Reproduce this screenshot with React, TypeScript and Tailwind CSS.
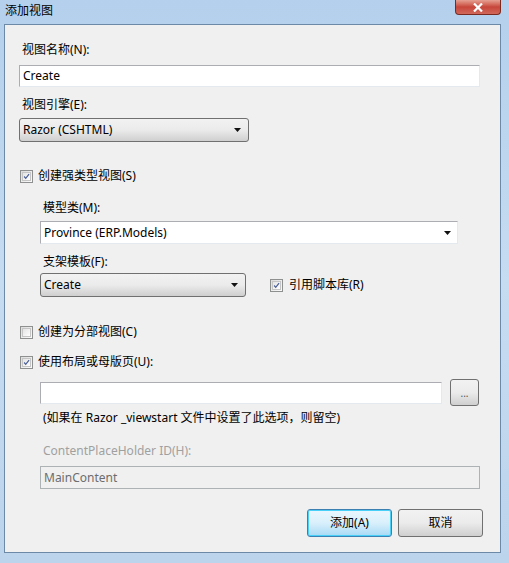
import React from 'react';

const font = { fontFamily: '"Noto Sans", "Noto Sans CJK SC", sans-serif' };

const Check: React.FC<{ checked?: boolean }> = ({ checked }) => (
  <div className="w-[13px] h-[13px] border border-[#8e8f8f] bg-gradient-to-br from-[#dcdcdc] to-[#fbfbfb] flex items-center justify-center shrink-0">
    <div className="w-[9px] h-[9px] border border-[#c5c5c5] bg-gradient-to-br from-[#e4e4e4] to-white flex items-center justify-center">
      {checked && (
        <svg width="9" height="9" viewBox="0 0 9 9">
          <path d="M1.5 4.5 L3.5 6.8 L7.8 1.5" fill="none" stroke="#4a5f97" strokeWidth="1.6" />
        </svg>
      )}
    </div>
  </div>
);

const Arrow = () => (
  <svg width="7" height="4" viewBox="0 0 7 4">
    <path d="M0 0 H7 L3.5 4 Z" fill="#111" />
  </svg>
);

const Select: React.FC<{ value: string; w: string }> = ({ value, w }) => (
  <div className={`${w} h-[24px] rounded-[3px] border border-[#707070] bg-gradient-to-b from-[#f2f2f2] via-[#ebebeb] to-[#cfcfcf] flex items-center justify-between pl-[3px] pr-[7px] text-[12px] text-black`}>
    <span>{value}</span>
    <Arrow />
  </div>
);

const App: React.FC = () => {
  return (
    <div style={font} className="w-[509px] h-[563px] bg-gradient-to-b from-[#b4d0ec] via-[#c6dcf1] to-[#bcd4ec] flex flex-col overflow-hidden">
      {/* title bar */}
      <div className="h-[24px] flex items-start justify-between shrink-0">
        <div className="pl-[5px] pt-[3px] text-[12px] leading-[16px] text-black">添加视图</div>
        <div className="mr-[8px] w-[46px] h-[15px] rounded-b-[4px] border border-[#7a2a20] border-t-0 bg-gradient-to-b from-[#e5a093] via-[#c7453a] to-[#d0685a] flex items-center justify-center">
          <svg width="10" height="9" viewBox="0 0 10 9">
            <path d="M1 0.5 L9 8.5 M9 0.5 L1 8.5" stroke="#fff" strokeWidth="2.2" />
          </svg>
        </div>
      </div>

      {/* client area */}
      <div className="ml-[4px] mr-[8px] h-[529px] border border-[#6d89a8] bg-[#f0f0f0] text-[12px] text-black flex flex-col">
        <div className="pl-[17px] pt-[19px] leading-[12px]">视图名称(N):</div>
        <div className="ml-[14px] mt-[9px] w-[461px] h-[22px] bg-white border border-[#abadb3] border-r-[#e3e9ef] border-b-[#e3e9ef] flex items-center pl-[3px]">Create</div>
        <div className="pl-[17px] mt-[12px] leading-[12px]">视图引擎(E):</div>
        <div className="ml-[14px] mt-[7px]">
          <Select value="Razor (CSHTML)" w="w-[230px]" />
        </div>

        <div className="ml-[15px] mt-[27px] flex items-center gap-[5px] h-[14px]">
          <Check checked />
          <span>创建强类型视图(S)</span>
        </div>

        <div className="pl-[38px] mt-[19px] leading-[12px]">模型类(M):</div>
        <div className="ml-[35px] mt-[7px] w-[418px] h-[23px] bg-white border border-[#abadb3] border-r-[#e3e9ef] border-b-[#e3e9ef] flex items-center justify-between pl-[3px] pr-[6px]">
          <span>Province (ERP.Models)</span>
          <Arrow />
        </div>
        <div className="pl-[38px] mt-[12px] leading-[12px]">支架模板(F):</div>
        <div className="ml-[35px] mt-[5px] flex items-center">
          <Select value="Create" w="w-[206px]" />
          <div className="ml-[24px] flex items-center gap-[6px]">
            <Check checked />
            <span>引用脚本库(R)</span>
          </div>
        </div>

        <div className="ml-[15px] mt-[28px] flex items-center gap-[5px] h-[14px]">
          <Check />
          <span>创建为分部视图(C)</span>
        </div>
        <div className="ml-[15px] mt-[16px] flex items-center gap-[5px] h-[14px]">
          <Check checked />
          <span>使用布局或母版页(U):</span>
        </div>

        <div className="ml-[35px] mt-[10px] flex items-center">
          <div className="w-[402px] h-[22px] bg-white border border-[#abadb3] border-r-[#e3e9ef] border-b-[#e3e9ef]" />
          <div className="ml-[8px] w-[29px] h-[27px] rounded-[3px] border border-[#707070] bg-gradient-to-b from-[#f2f2f2] via-[#ebebeb] to-[#cfcfcf] flex items-center justify-center text-[10px] leading-[10px] text-[#555]">...</div>
        </div>
        <div className="pl-[38px] mt-[6px] leading-[12px]">(如果在 Razor _viewstart 文件中设置了此选项，则留空)</div>

        <div className="pl-[38px] mt-[21px] leading-[12px] text-[#a0a0a0]">ContentPlaceHolder ID(H):</div>
        <div className="ml-[35px] mt-[9px] w-[440px] h-[23px] bg-[#f0f0f0] border border-[#adb2b5] flex items-center pl-[3px] text-[#6d6d6d]">MainContent</div>

        <div className="mt-[20px] mr-[17px] flex justify-end gap-[6px]">
          <div className="w-[85px] h-[28px] rounded-[3px] border border-[#3c7fb1] shadow-[inset_0_0_0_1px_#48d0f8] bg-gradient-to-b from-[#eaf6fd] via-[#d9f0fc] to-[#a7d9f5] flex items-center justify-center">添加(A)</div>
          <div className="w-[85px] h-[28px] rounded-[3px] border border-[#707070] bg-gradient-to-b from-[#f2f2f2] via-[#ebebeb] to-[#cfcfcf] flex items-center justify-center">取消</div>
        </div>
      </div>
    </div>
  );
};

export default App;
